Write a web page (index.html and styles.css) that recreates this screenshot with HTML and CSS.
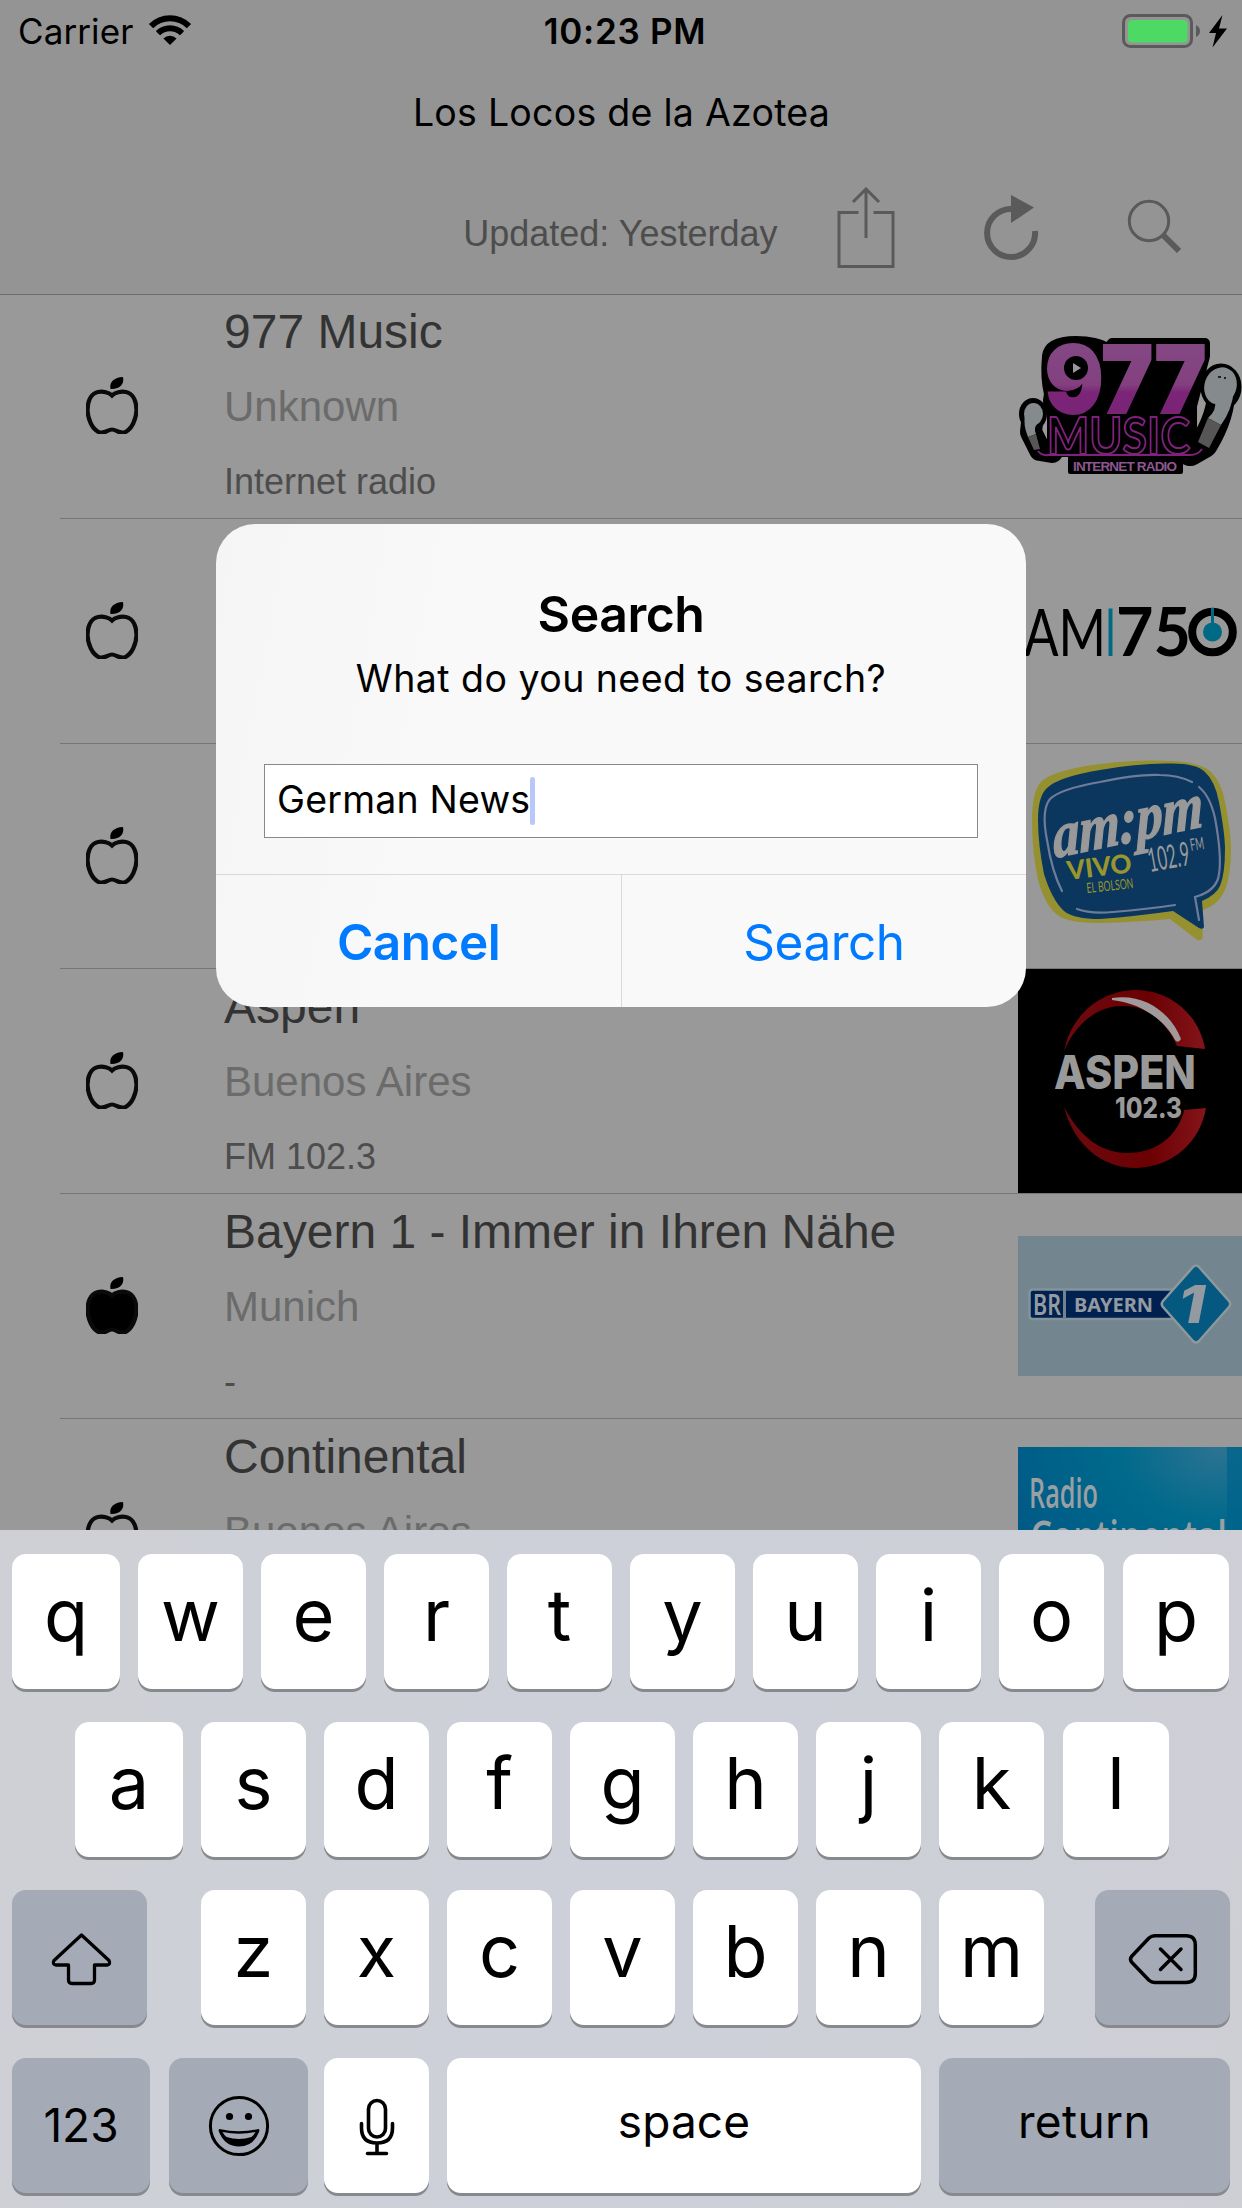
FILE: index.html
```html
<!DOCTYPE html>
<html lang="en">
<head>
<meta charset="utf-8">
<title>Los Locos de la Azotea</title>
<link rel="stylesheet" href="styles.css">
</head>
<body>
<svg class="defs" width="0" height="0" aria-hidden="true">
  <symbol id="apple" viewBox="0 0 52 57">
    <path d="M26 18.500C23 15.500 17 14 12 15C4 16.500 1.500 26 1.500 33C1.800 42 6 52 13 55.300C19 57 22 52.500 26 52.500C30 52.500 33 57 39 55.300C46 52 50.200 42 50.500 33C50.500 26 48 16.500 40 15C35 14 29 15.500 26 18.500Z" stroke="#0a0a0a" stroke-width="4.200"/>
    <path d="M24.500 12C23 5 28 .5 37 0C38.500 7 34 12.500 24.500 12Z" fill="#000"/>
  </symbol>
</svg>
<main class="screen">
  <header class="header">
    <div class="status">
      <span class="carrier">Carrier</span>
      <svg class="wifi" width="44" height="32" viewBox="149 14 44 32">
        <path d="M171 45L164.400 38.400A9.300 9.300 0 0 1 177.600 38.400Z"/>
        <path d="M158.800 33.200L156.900 31A20 20 0 0 1 185.100 31L183.200 33.200L180.900 35.300A14 14 0 0 0 161.100 35.300Z"/>
        <path d="M154.200 28.200L149.900 24A30 30 0 0 1 192.100 24L187.800 28.200A24 24 0 0 0 154.200 28.200Z"/>
      </svg>
      <span class="time">10:23 PM</span>
      <svg class="battery" width="108" height="36" viewBox="1121 12 108 36">
        <rect x="1123.500" y="14.500" width="68" height="31" rx="7" fill="none" stroke="#5a5a5a" stroke-width="3"/>
        <rect x="1128" y="19" width="59.500" height="22.500" rx="4" fill="#4cd964"/>
        <path d="M1196 24Q1200 26 1200 30Q1200 34 1196 36Z" fill="#5a5a5a"/>
        <path d="M1222.500 14L1209 32H1216L1212.500 46.500L1227 27.500H1219Z"/>
      </svg>
    </div>
    <h1 class="title">Los Locos de la Azotea</h1>
    <div class="toolbar">
      <span class="updated">Updated: Yesterday</span>
      <svg class="tool share" width="58" height="82" viewBox="836.500 187 58 82" fill="none" stroke="#5a5a5a" stroke-width="3">
        <path d="M858 212.500H838.500V266.500H892.500V212.500H873M865.500 189V238M852.500 202L865.500 189L878.500 202"/>
      </svg>
      <svg class="tool refresh" width="56" height="70" viewBox="983 193 56 70">
        <path d="M1035 231A24 24 0 1 1 1012 209" fill="none" stroke="#5a5a5a" stroke-width="6"/>
        <path d="M1011 195L1034 207.500L1011 223Z" fill="#5a5a5a"/>
      </svg>
      <svg class="tool find" width="54" height="56" viewBox="1127 199 54 56" fill="none" stroke="#5a5a5a">
        <circle cx="1149" cy="221" r="19.700" stroke-width="3"/>
        <path d="M1163 235L1179 251" stroke-width="6"/>
      </svg>
    </div>
  </header>

  <section class="stations">
    <article class="row">
      <svg class="mark"><use href="#apple"/></svg>
      <div class="info"><h2>977 Music</h2><p class="city">Unknown</p><p class="freq">Internet radio</p></div>
      <svg class="logo" viewBox="0 0 224 224">
        <g stroke="#000" stroke-linejoin="round" stroke-linecap="round" fill="#000">
          <path d="M29 62Q31 47 58 47Q78 47 90 54L94 49H187V62L174 112V158H34V118Q28 112 31 100Q27 84 29 62Z" stroke-width="10"/>
          <path d="M15 120L13 138L22 156L34 158" stroke-width="22" fill="none"/>
          <ellipse cx="15" cy="120" rx="11" ry="13" stroke-width="6"/>
          <path d="M203 96Q204 120 186 150L172 158" stroke-width="28" fill="none"/>
          <ellipse cx="203" cy="93" rx="17" ry="20" stroke-width="7"/>
          <rect x="52" y="160" width="111" height="18" stroke-width="4"/>
        </g>
        <g fill="#858a8c">
          <ellipse cx="15.500" cy="120" rx="9.500" ry="11"/><path d="M7 121L20 129Q15 134 18 140L10 143Q5 131 7 121Z"/>
          <ellipse cx="202.500" cy="92" rx="16" ry="19" transform="rotate(20 202.500 92)"/><path d="M197 107L216 96Q214 116 203 131L190 124Q199 116 197 107Z"/>
        </g>
        <path d="M10 143L18 140L22 155L16 156Z" fill="#565656"/><path d="M190 124L203 131L191 154L180 148Z" fill="#565656"/>
        <path d="M200 82h3v2h-3zM206 83h2v2h-2z" fill="#222"/>
        <text x="27" y="119" font-family="Inter" font-weight="900" font-size="94" fill="url(#violet)" stroke="url(#violet)" stroke-width="2" textLength="161" lengthAdjust="spacingAndGlyphs">977</text>
        <circle cx="58" cy="74" r="12" fill="#000"/><path d="M55 69L63 74L55 79Z" fill="#999"/>
        <path d="M20 157Q24 162 30 161H172Q180 161 184 155" fill="none" stroke="#82207e" stroke-width="2"/>
        <text x="29" y="160" font-family="Lato" font-weight="700" font-size="52" fill="#000" stroke="#82207e" stroke-width="2" textLength="143" lengthAdjust="spacingAndGlyphs">MUSIC</text>
        <text x="55" y="177" font-family="Liberation Sans" font-weight="700" font-size="13.500" fill="#8d5791" textLength="104">INTERNET RADIO</text>
        <defs><linearGradient id="violet" x1="0" y1="0" x2="0" y2="1"><stop offset=".2" stop-color="#834883"/><stop offset=".55" stop-color="#83407f"/><stop offset=".62" stop-color="#7b2478"/><stop offset="1" stop-color="#782476"/></linearGradient></defs>
      </svg>
    </article>
    <article class="row">
      <svg class="mark"><use href="#apple"/></svg>
      <div class="info"></div>
      <svg class="logo" viewBox="0 0 224 224">
        <text x="6" y="137" font-family="Lato" font-weight="400" font-size="65" textLength="82" lengthAdjust="spacingAndGlyphs">AM</text>
        <path d="M92.500 89.500V137" stroke="#006a84" stroke-width="4"/>
        <text x="98" y="137" font-family="Lato" font-weight="700" font-size="66" textLength="75" lengthAdjust="spacingAndGlyphs">75</text>
        <circle cx="194.500" cy="113" r="20.300" fill="none" stroke="#000" stroke-width="8"/>
        <path d="M194.500 89V108" stroke="#006a84" stroke-width="3"/><circle cx="194.500" cy="113" r="9.500" fill="#006a84"/>
      </svg>
    </article>
    <article class="row">
      <svg class="mark"><use href="#apple"/></svg>
      <div class="info"></div>
      <svg class="logo" viewBox="0 0 224 224">
        <path d="M14 76Q14 46 24 37Q36 26 82 20Q120 15 152 17Q182 18 193 28Q204 39 207 58Q213 88 213 105Q213 135 205 150Q199 161 185 166L184.500 194Q182 198 178 195L152 175Q120 178 82 179Q52 179 41 172Q28 164 20 136Q14 108 14 76Z" fill="#969130"/>
        <path d="M20 76Q20 52 29 44Q40 33 82 26Q120 19 152 19.500Q178 19 187 28Q197 37 201 58Q207 90 207 105Q207 130 202 142Q198 151 184 157L186 183Q185 186 181 184L155 167Q120 172 82 175Q56 175 46 167Q34 156 26 130Q20 100 20 76Z" fill="#0b375e"/>
        <g fill="none" stroke="#6f7c98" stroke-width="2.200" stroke-linecap="round">
          <path d="M44 147Q34 128 29 96Q23 66 32 55Q42 45 82 38Q120 30 142 31Q160 31 174 38"/>
          <path d="M181 43Q192 52 197 74Q204 112 201 130Q199 147 177 153L181 176"/>
          <path d="M59 165Q72 170 95 168Q130 165 157 161"/>
        </g>
        <g fill="#999">
          <text transform="translate(36 114) rotate(-12) skewX(-10)" font-family="Liberation Serif" font-style="italic" font-weight="700" font-size="64" stroke="#999" stroke-width="1.500" textLength="153" lengthAdjust="spacingAndGlyphs">am:pm</text>
          <text transform="translate(132 128) rotate(-10)" font-family="Lato" font-weight="400" font-size="33" textLength="42" lengthAdjust="spacingAndGlyphs">102.9</text>
          <text transform="translate(173 107) rotate(-9)" font-family="Lato" font-size="17" textLength="14" lengthAdjust="spacingAndGlyphs">FM</text>
        </g>
        <g fill="#9a962e">
          <text transform="translate(50 136) rotate(-7)" font-family="Lato" font-weight="900" font-size="26" textLength="65" lengthAdjust="spacingAndGlyphs">VIVO</text>
          <text transform="translate(69 149) rotate(-6)" font-family="Lato" font-size="14" textLength="47" lengthAdjust="spacingAndGlyphs">EL BOLSON</text>
        </g>
      </svg>
    </article>
    <article class="row">
      <svg class="mark"><use href="#apple"/></svg>
      <div class="info"><h2>Aspen</h2><p class="city">Buenos Aires</p><p class="freq">FM 102.3</p></div>
      <svg class="logo" viewBox="0 0 224 224">
        <rect width="224" height="224" fill="#000"/>
        <path d="M46 82C54 44 84 21 119 21C155 22 182 48 187 80L159 77C148 52 128 36 104 37C80 37 58 54 46 82Z" fill="url(#red)"/>
        <path d="M94 29C125 24 152 42 163 70Q160 75 157 71C146 50 122 34 94 31Z" fill="#a09a9a"/>
        <path d="M46 138C56 176 84 199 118 199C154 198 182 174 188 139L166 141C160 168 136 185 108 184C82 183 62 168 46 138Z" fill="url(#red)"/>
        <g font-family="Inter" font-weight="800" fill="#999" stroke="#000" stroke-width="5" paint-order="stroke">
          <text x="36" y="120" font-size="47" textLength="142" lengthAdjust="spacingAndGlyphs">ASPEN</text>
          <text x="97" y="149" font-size="29" textLength="67" lengthAdjust="spacingAndGlyphs">102.3</text>
        </g>
        <defs><linearGradient id="red"><stop stop-color="#6d0a0e"/><stop offset=".6" stop-color="#6b0003"/><stop offset="1" stop-color="#84151a"/></linearGradient></defs>
      </svg>
    </article>
    <article class="row">
      <svg class="mark filled"><use href="#apple"/></svg>
      <div class="info"><h2>Bayern 1 - Immer in Ihren Nähe</h2><p class="city">Munich</p><p class="freq">-</p></div>
      <svg class="logo" viewBox="0 0 224 224">
        <rect y="42" width="224" height="140" fill="#73858f"/>
        <rect x="11.500" y="95.500" width="145" height="29.500" rx="3" fill="#00204f" stroke="#84939b" stroke-width="2.500"/>
        <path d="M46.500 96V125" stroke="#71838f" stroke-width="3"/>
        <path d="M175 73Q178 70 181 73L211 107Q213.500 110 211 113L181 147Q178 150 175 147L145 113Q142.500 110 145 107Z" fill="#05587f" stroke="#8d989d" stroke-width="2.500"/>
        <g fill="#949ba0" font-family="Noto Sans">
          <text x="15" y="121" font-size="28" font-weight="600" textLength="28" lengthAdjust="spacingAndGlyphs">BR</text>
          <text x="56" y="118" font-size="20" font-weight="700" textLength="79" lengthAdjust="spacingAndGlyphs">BAYERN</text>
          <text x="160" y="129" font-size="52" font-weight="800" font-style="italic" font-family="Inter" textLength="27" lengthAdjust="spacingAndGlyphs">1</text>
        </g>
      </svg>
    </article>
    <article class="row">
      <svg class="mark"><use href="#apple"/></svg>
      <div class="info"><h2>Continental</h2><p class="city">Buenos Aires</p></div>
      <svg class="logo" viewBox="0 0 224 224">
        <rect y="28" width="224" height="168" fill="url(#sea)"/><rect x="209" y="28" width="15" height="168" fill="#00638b" opacity=".75"/>
        <g fill="#999fa3" font-family="Open Sans">
          <text x="11" y="89" font-size="42" font-weight="600" textLength="69" lengthAdjust="spacingAndGlyphs">Radio</text>
          <text x="12" y="134" font-size="46" font-weight="600" textLength="197" lengthAdjust="spacingAndGlyphs">Continental</text>
        </g>
        <defs><radialGradient id="sea" cx=".9" cy="0" r="1"><stop stop-color="#2d7391"/><stop offset=".45" stop-color="#006a8c"/><stop offset="1" stop-color="#005a86"/></radialGradient></defs>
      </svg>
    </article>
  </section>

  <section class="keyboard">
    <div class="keys top">
      <span class="key edge">q</span><span class="key">w</span><span class="key">e</span><span class="key">r</span><span class="key">t</span><span class="key">y</span><span class="key">u</span><span class="key">i</span><span class="key">o</span><span class="key last">p</span>
    </div>
    <div class="keys middle">
      <span class="key edge">a</span><span class="key">s</span><span class="key">d</span><span class="key">f</span><span class="key">g</span><span class="key">h</span><span class="key">j</span><span class="key">k</span><span class="key last">l</span>
    </div>
    <div class="keys lower">
      <span class="key dark shift">
        <svg width="62" height="56" viewBox="50 1931 62 56" fill="none" stroke="#000" stroke-width="3.300" stroke-linejoin="round"><path d="M81.500 1935L54 1960.500Q52 1964.500 56 1965H68.500V1980Q68.500 1983.500 72 1983.500H91Q94.500 1983.500 94.500 1980V1965H107Q111 1964.500 109 1960.500Z"/></svg>
      </span>
      <span class="key">z</span><span class="key">x</span><span class="key">c</span><span class="key">v</span><span class="key">b</span><span class="key">n</span><span class="key">m</span>
      <span class="key dark back">
        <svg width="72" height="54" viewBox="1127 1932 72 54" fill="none" stroke="#000" stroke-width="3.500" stroke-linejoin="round" stroke-linecap="round"><path d="M1154.500 1935.800H1186Q1195.300 1935.800 1195.300 1945V1973.500Q1195.300 1982.500 1186 1982.500H1154.500Q1151.500 1982.500 1149 1980.300L1131.500 1962Q1129.500 1959.200 1131.500 1956.500L1149 1938Q1151.500 1935.800 1154.500 1935.800ZM1160.500 1949L1181 1969.500M1181 1949L1160.500 1969.500"/></svg>
      </span>
    </div>
    <div class="keys bottom">
      <span class="key dark word num">123</span>
      <span class="key dark emoji">
        <svg width="62" height="62" viewBox="207 2095 62 62"><circle cx="238" cy="2126" r="28.600" fill="none" stroke="#000" stroke-width="3"/><circle cx="228.500" cy="2116.500" r="3.600"/><circle cx="247.500" cy="2116.500" r="3.600"/><path d="M218.500 2129Q238 2133.500 257.500 2129Q259 2129.500 258 2132Q252 2146.500 238 2146.500Q224 2146.500 218 2132Q217 2129.500 218.500 2129ZM221.500 2132Q223 2135 225.500 2137Q238 2141 250.500 2137Q253 2135 254.500 2132Q238 2135.500 221.500 2132Z" fill-rule="evenodd"/></svg>
      </span>
      <span class="key mic">
        <svg width="38" height="60" viewBox="358.500 2097 38 60" fill="none" stroke="#000" stroke-width="3.600" stroke-linecap="round"><rect x="369" y="2100.500" width="17" height="36.500" rx="8.500"/><path d="M362 2123.500V2128Q362 2143 377.500 2143Q393 2143 393 2128V2123.500M377.500 2143V2153.500M368 2153.500H387"/></svg>
      </span>
      <span class="key word space">space</span>
      <span class="key dark word return">return</span>
    </div>
  </section>

  <section class="dialog" role="dialog">
    <h2 class="dialog-title">Search</h2>
    <p class="dialog-text">What do you need to search?</p>
    <div class="field"><span>German News</span><i class="caret"></i></div>
    <div class="actions"><button class="cancel">Cancel</button><button class="confirm">Search</button></div>
  </section>
</main>
</body>
</html>
```
FILE: styles.css
```css
* { box-sizing: border-box; margin: 0; padding: 0; }
body { font-family: Inter, "Liberation Sans", sans-serif; color: #000; background: #999; }
svg { display: block; flex: none; }
.defs { display: none; }
.screen { position: relative; display: flex; flex-direction: column; width: 1242px; height: 2208px; overflow: hidden; }

.header { flex: none; height: 294px; background: #949494; box-shadow: 0 1px #6c6c6c; z-index: 1; }
.status { display: grid; grid-template-columns: auto 1fr auto; align-items: center; height: 62px; padding: 0 13px 0 18px; position: relative; font-size: 35px; line-height: 62px; }
.carrier { letter-spacing: .1px; }
.wifi { margin: -2px 0 0 15px; }
.time { position: absolute; left: 0; right: 0; top: 0; text-align: center; font-weight: 600; letter-spacing: .7px; padding-left: 8px; }
.title { height: 100px; line-height: 102px; text-align: center; font-size: 37.500px; font-weight: 400; letter-spacing: .25px; padding-left: 1px; }
.toolbar { display: flex; justify-content: flex-end; align-items: flex-start; height: 132px; padding-right: 61px; }
.updated { font: 36px/72px "Liberation Sans", Arial, sans-serif; color: #4d4d4d; margin: 36px 59px 0 0; }
.share { margin: 25px 88.500px 0 0; }
.refresh { margin: 31px 88px 0 0; }
.find { margin-top: 37px; }

.stations { flex: 1; min-height: 0; overflow: hidden; background: #999; }
.row { display: flex; height: 225px; margin-left: 60px; border-bottom: 1px solid #767676; }
.mark { width: 52px; height: 57px; margin: 83px 86px 0 26px; fill: none; }
.mark.filled { fill: #000; }
.info { flex: 1; font-family: "Liberation Sans", Arial, sans-serif; }
.info h2 { font-size: 48px; font-weight: 400; line-height: 75px; color: #333; }
.info p { line-height: 75px; }
.city { font-size: 42px; color: #6b6b6b; }
.freq { font-size: 36px; color: #4d4d4d; }
.logo { width: 224px; height: 224px; }

.keyboard { flex: none; height: 678px; padding: 24px 12px 0; display: flex; flex-direction: column; gap: 33px; background: linear-gradient(100deg, #ced0d5, #cdd0d9 50%, #cecfd5); }
.keys { display: flex; gap: 18px; }
.middle { padding-left: 63px; }
.key { width: 105px; height: 135px; flex: none; background: #fff; border-radius: 14px; box-shadow: 0 3px #88898d; font-size: 72px; font-weight: 400; line-height: 122px; text-align: center; }
.key svg { margin: 0 auto; }
.edge { width: 108px; }
.last { width: 106px; margin-left: 1px; }
.dark { background: #a4aab6; }
.shift, .back { width: 135px; }
.shift { margin-right: 36px; padding: 41px 0 0 2px; }
.back { margin-left: 33px; padding-top: 42px; }
.num { width: 138px; }
.emoji { width: 139px; margin: 0 -2px 0 1px; padding-top: 37px; }
.mic { padding-top: 39px; }
.word { font-size: 46px; line-height: 127px; }
.num { line-height: 135px; }
.space { width: 474px; letter-spacing: .1px; }
.return { width: 291px; letter-spacing: .4px; }

.dialog { position: absolute; left: 216px; top: 524px; width: 810px; height: 483px; padding-top: 60px; border-radius: 39px; overflow: hidden; text-align: center; background: linear-gradient(100deg, #f5f5f5, #f9f9f9 30%); }
.dialog-title { font-size: 50px; font-weight: 600; line-height: 60px; letter-spacing: -.5px; }
.dialog-text { margin-top: 10px; font-size: 37.500px; line-height: 50px; letter-spacing: .45px; }
.field { display: flex; align-items: center; width: 714px; height: 74px; margin: 60px 0 0 48px; padding-left: 12px; border: 1px solid #888; background: #fff; font-size: 37.500px; line-height: 70px; letter-spacing: .2px; }
.field span { margin-top: -2px; }
.caret { width: 5px; height: 48px; border-radius: 2.500px; background: #b9c8fb; }
.actions { display: grid; grid-template-columns: 406px 404px; height: 133px; margin-top: 36px; border-top: 1px solid #d9d9dc; }
.actions button { border: 0; background: none; font: 400 49.500px/134px Inter, sans-serif; letter-spacing: -.5px; color: #007aff; }
.actions .cancel { font-weight: 600; border-right: 1px solid #d9d9dc; }
```
